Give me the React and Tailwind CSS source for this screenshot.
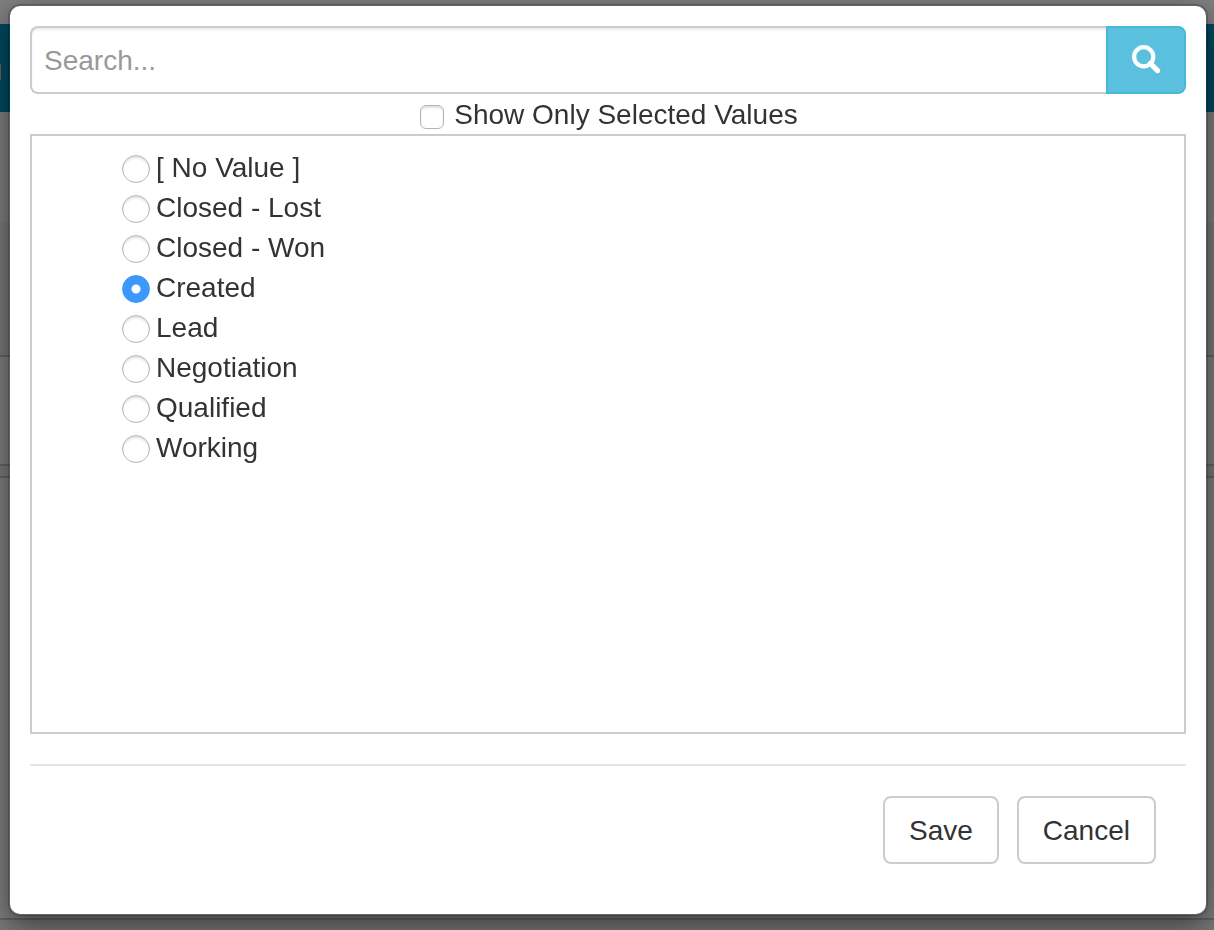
import { useState } from "react";

const stages = [
  "[ No Value ]",
  "Closed - Lost",
  "Closed - Won",
  "Created",
  "Lead",
  "Negotiation",
  "Qualified",
  "Working",
];

function PageBehind() {
  return (
    <div aria-hidden="true" className="flex min-h-screen flex-col bg-[#808080]">
      <div className="h-6" />
      <div className="flex h-[88px] items-center bg-[#004a62] pt-2">
        <div className="h-4 w-px bg-[#6b5f5f]" />
      </div>
      <div className="h-[110px]" />
      <div className="h-[135px] border-b-2 border-[#656565] bg-[#7a7a7a]" />
      <div className="h-[109px] border-b-2 border-[#656565]" />
      <div className="h-3 border-b-2 border-[#656565] bg-[#7a7a7a]" />
      <div className="h-[442px] border-b-2 border-[#656565]" />
      <div className="grow bg-[#7a7a7a]" />
    </div>
  );
}

function SearchIcon() {
  return (
    <svg aria-hidden="true" viewBox="0 0 28 28" className="size-7 overflow-visible" fill="none" stroke="#fff">
      <circle cx="11.7" cy="10.7" r="9.6" strokeWidth="4.2" />
      <path d="M18.3 17.3 L25.6 24.6" strokeWidth="5.2" strokeLinecap="round" />
    </svg>
  );
}

function StageOption({ label, checked, onSelect }) {
  return (
    <label className="flex h-10 items-center gap-1.5">
      <input
        type="radio"
        name="stage"
        checked={checked}
        onChange={onSelect}
        className="mt-0.5 size-7 shrink-0 appearance-none rounded-full border border-[#b4b4b4] bg-white shadow-[inset_0_2px_2px_rgba(0,0,0,0.12)] checked:border-[#3b99fc] checked:bg-[radial-gradient(circle,#fff_4px,#3b99fc_5px)] checked:shadow-none"
      />
      {label}
    </label>
  );
}

const buttonClass = "h-[68px] rounded-lg border-2 border-[#ccc] bg-white px-6 pt-0.5 text-[#333]";

export default function App() {
  const [selected, setSelected] = useState("Created");
  const [query, setQuery] = useState("");
  const [onlySelected, setOnlySelected] = useState(false);
  const visible = stages.filter(
    (s) => s.toLowerCase().includes(query.toLowerCase()) && (!onlySelected || s === selected)
  );

  return (
    <div className="font-['Liberation_Sans',Arial,sans-serif] text-[28px] leading-10 text-[#333]">
      <PageBehind />
      <div className="fixed inset-0 overflow-hidden pt-1 pr-1.5 pl-2">
        <div
          role="dialog"
          aria-modal="true"
          aria-label="Select value"
          className="rounded-xl border-2 border-black/20 bg-white bg-clip-padding px-5 pt-5 pb-[50px] shadow-[0_10px_30px_rgba(0,0,0,0.5)]"
        >
          <form className="flex" onSubmit={(e) => e.preventDefault()}>
            <input
              type="text"
              aria-label="Search"
              placeholder="Search..."
              value={query}
              onChange={(e) => setQuery(e.target.value)}
              className="h-[68px] min-w-0 grow rounded-l-lg border-2 border-r-0 border-[#ccc] bg-white px-3 pt-0.5 shadow-[inset_0_2px_2px_rgba(0,0,0,0.075)] outline-none placeholder:text-[#999]"
            />
            <button
              type="submit"
              aria-label="Search"
              className="flex h-[68px] w-20 shrink-0 items-center justify-center rounded-r-lg border-2 border-[#46b8da] bg-[#5bc0de]"
            >
              <SearchIcon />
            </button>
          </form>

          <label className="flex h-10 items-center justify-center gap-2.5 pt-0.5 pl-0.5">
            <input
              type="checkbox"
              checked={onlySelected}
              onChange={(e) => setOnlySelected(e.target.checked)}
              className="mt-1 size-6 appearance-none rounded-md border border-[#b4b4b4] bg-white shadow-[inset_0_2px_2px_rgba(0,0,0,0.12)] checked:bg-[#3b99fc]"
            />
            Show Only Selected Values
          </label>

          <div className="h-[600px] overflow-auto border-2 border-[#ccc] py-3 pl-[90px]">
            {visible.map((s) => (
              <StageOption
                key={s}
                label={s}
                checked={s === selected}
                onSelect={() => setSelected(s)}
              />
            ))}
          </div>

          <hr className="my-[30px] border-t-2 border-[#e5e5e5]" />

          <div className="flex justify-end gap-[18px] pr-[30px]">
            <button type="button" className={buttonClass}>Save</button>
            <button type="button" className={buttonClass}>Cancel</button>
          </div>
        </div>
      </div>
    </div>
  );
}
